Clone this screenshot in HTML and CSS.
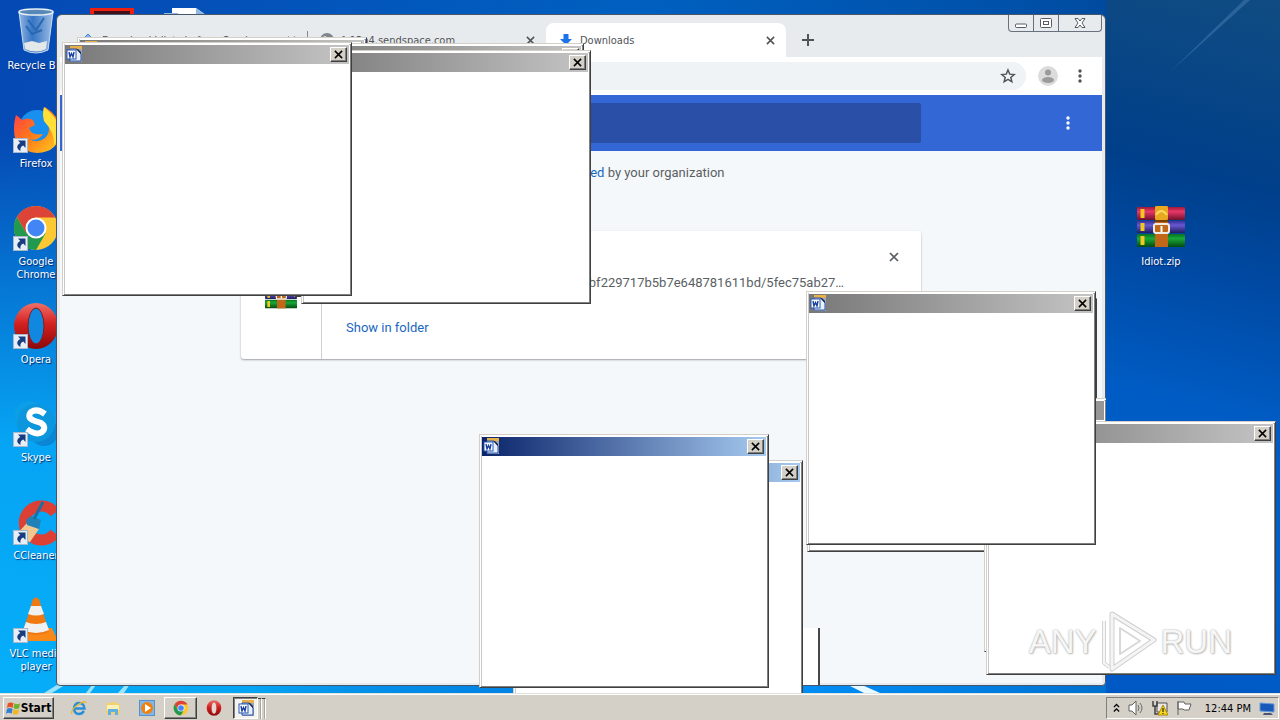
FILE: index.html
```html
<!DOCTYPE html>
<html lang="en">
<head>
<meta charset="utf-8">
<title>Desktop</title>
<link rel="stylesheet" href="styles.css">
</head>
<body>
<svg class="defs" aria-hidden="true">
  <defs>
    <linearGradient id="gRed" x1="0" y1="0" x2="0" y2="1"><stop offset="0" stop-color="#f07068"/><stop offset=".45" stop-color="#d42020"/><stop offset="1" stop-color="#8c0808"/></linearGradient>
    <linearGradient id="gFox" x1="0" y1="0" x2="1" y2="1"><stop offset="0" stop-color="#ff3850"/><stop offset=".5" stop-color="#ff7a18"/><stop offset="1" stop-color="#ffd020"/></linearGradient>
    <linearGradient id="gBook1" x1="0" y1="0" x2="0" y2="1"><stop offset="0" stop-color="#a01838"/><stop offset=".35" stop-color="#e83868"/><stop offset="1" stop-color="#70102c"/></linearGradient>
    <linearGradient id="gBook2" x1="0" y1="0" x2="0" y2="1"><stop offset="0" stop-color="#38309c"/><stop offset=".35" stop-color="#6858d0"/><stop offset="1" stop-color="#201c60"/></linearGradient>
    <linearGradient id="gBook3" x1="0" y1="0" x2="0" y2="1"><stop offset="0" stop-color="#087020"/><stop offset=".35" stop-color="#18a838"/><stop offset="1" stop-color="#044810"/></linearGradient>
    <linearGradient id="gBin" x1="0" y1="0" x2="1" y2="0"><stop offset="0" stop-color="#b8d4ee" stop-opacity=".8"/><stop offset=".4" stop-color="#4c88cc" stop-opacity=".7"/><stop offset="1" stop-color="#c8dcf0" stop-opacity=".8"/></linearGradient>
  </defs>
  <symbol id="word" viewBox="0 0 16 16">
    <rect x="4" y="0" width="12" height="16" fill="#98a8c0"/>
    <rect x="4" y="0" width="12" height="3" fill="#e8b048"/>
    <path d="M4 3h7l4 5v7H4z" fill="#e8f0fc" stroke="#2850a0"/>
    <path d="M10 3l5 5V6l-3-3z" fill="#202848"/>
    <rect x="1" y="4" width="9" height="9" fill="#fff" stroke="#2858b8"/>
    <path d="M3 6l1 5 1.500-3.500L7 11l1-5" fill="none" stroke="#1840a0" stroke-width="1.400"/>
  </symbol>
  <symbol id="x" viewBox="0 0 10 10"><path d="M1 1l8 8M9 1l-8 8" stroke="currentColor" stroke-width="1.700" fill="none"/></symbol>
  <symbol id="dots" viewBox="0 0 4 14"><circle cx="2" cy="2" r="1.700"/><circle cx="2" cy="7" r="1.700"/><circle cx="2" cy="12" r="1.700"/></symbol>
  <symbol id="link" viewBox="0 0 15 15"><rect x=".5" y=".5" width="14" height="14" fill="#e8eef6" stroke="#a8b8cc"/><path d="M5 2.500h7.500V10L10.300 7.500C8 8.500 7 10 7.500 13 3 10.500 3.500 7 7.300 5z" fill="#183c80"/></symbol>
  <symbol id="chrome" viewBox="0 0 48 48">
    <circle cx="24" cy="24" r="22" fill="#fcc934"/>
    <path d="M4.900 13A22 22 0 0 1 43.100 13L43.300 13.500H24L14.500 29.500z" fill="#dc4437"/>
    <path d="M4.900 13L14.500 29.500 24 24 33.500 29.500 24 46A22 22 0 0 1 4.900 13z" fill="#23984f"/>
    <circle cx="24" cy="24" r="10.500" fill="#fff"/><circle cx="24" cy="24" r="8.500" fill="#4285f4"/>
  </symbol>
  <symbol id="opera" viewBox="0 0 48 48"><ellipse cx="24" cy="24" rx="22" ry="23" fill="url(#gRed)"/><ellipse cx="24" cy="24" rx="8" ry="18" fill="var(--hole)" stroke="#8c1818"/></symbol>
  <symbol id="rar" viewBox="0 0 48 42">
    <rect x="0" y="1" width="48" height="13" rx="1" fill="url(#gBook1)"/><rect x="0" y="15" width="48" height="12" rx="1" fill="url(#gBook2)"/><rect x="0" y="28" width="48" height="13" rx="1" fill="url(#gBook3)"/>
    <path d="M5.500 3v9M5.500 17v8M5.500 30v9" stroke="#f0c820" stroke-width="4"/>
    <rect x="18" y="0" width="13" height="41" fill="#c06818"/><rect x="18" y="0" width="13" height="14" rx="2" fill="#e8a820"/><path d="M19 9q5-8 11 0" fill="none" stroke="#fcd860" stroke-width="2"/><rect x="18" y="14" width="13" height="2" fill="#784008"/>
    <rect x="17" y="18" width="15" height="9" rx="2" fill="none" stroke="#f0ece4" stroke-width="2"/><path d="M24.500 20v6" stroke="#fff" stroke-width="2"/>
  </symbol>
</svg>

<main class="desktop">
  <svg class="rays" viewBox="0 0 1280 693" preserveAspectRatio="none" aria-hidden="true">
    <path d="M1170 72L1244 0h6z" fill="#6fa0d0" opacity=".3"/>
    <path d="M44 693l16-10h8l-16 10zM86 693l6-8h4l-6 8zM118 693l8-9h4l-6 9z" fill="#bff0ff" opacity=".8"/>
    <path d="M848 685h14l18 8h-16z" fill="#e8faff"/>
  </svg>
  <svg class="peek" viewBox="0 0 124 16" aria-hidden="true"><path d="M2 1h40v15H2z" fill="#401018" stroke="#f02010" stroke-width="4"/><path d="M82 0h24l10 7v9H82z" fill="#fff"/><path d="M106 0v7h10zM74 5h14v4H74z" fill="#90b8e0"/></svg>

  <nav class="icons">
    <div class="tile"><svg viewBox="0 0 48 48"><path d="M7 4h34l-5 38q-12 6-24 0z" fill="url(#gBin)" stroke="#c8dcee"/><ellipse cx="24" cy="4" rx="17" ry="3" fill="#5888b8" stroke="#e8f0f4" stroke-width="1.500"/><path d="M16 12l8 10 8-12M14 18l6 8 10-4" stroke="#2868b0" stroke-width="2" fill="none"/><path d="M12 35l8-2 7 2 8-2-1 8q-10 5-21 0z" fill="#e4e8e8"/></svg><span>Recycle Bin</span></div>
    <div class="tile"><svg viewBox="0 0 48 48"><circle cx="25" cy="22" r="18" fill="#1890f0"/><path d="M4 9q3 2 6 5 6-3 11 0l2 5-6 3q2 8 14 6-6 8-14 5 9 5 16-1 7-7 2-18l-3-6 1-7q16 10 15 25-1 20-23 21Q2 45 2 24q0-9 2-15z" fill="url(#gFox)"/><path d="M32 1q16 12 15 26-1 8-5 12 1-12-10-24-2-8 0-14z" fill="#ffdf38"/></svg><svg class="arrow"><use href="#link"/></svg><span>Firefox</span></div>
    <div class="tile"><svg><use href="#chrome"/></svg><svg class="arrow"><use href="#link"/></svg><span>Google<br>Chrome</span></div>
    <div class="tile opera"><svg><use href="#opera"/></svg><svg class="arrow"><use href="#link"/></svg><span>Opera</span></div>
    <div class="tile"><svg viewBox="0 0 48 48"><circle cx="17" cy="16" r="15" fill="#0a9fe6"/><circle cx="32" cy="32" r="14" fill="#0a86d4"/><circle cx="24" cy="23" r="19" fill="#0c96de"/><path d="M33 14q-8-6-14-2-5 6 4 9l6 2q6 4 1 9-6 4-15-3" stroke="#fff" stroke-width="6" fill="none"/></svg><svg class="arrow"><use href="#link"/></svg><span>Skype</span></div>
    <div class="tile"><svg viewBox="0 0 48 48"><path d="M43 15A17 17 0 1 0 43 35" fill="none" stroke="#dc4034" stroke-width="11"/><path d="M15 25l12 6-9 13-16-5z" fill="#f0c890"/><path d="M14 22l5-4 10 4-2 9-12-4z" fill="#2080b8"/><path d="M22 21L31 4" stroke="#1870a8" stroke-width="3"/></svg><svg class="arrow"><use href="#link"/></svg><span>CCleaner</span></div>
    <div class="tile"><svg viewBox="0 0 48 48"><path d="M8 32h32l6 13H2z" fill="#f88818"/><path d="M21 3q3-3 6 0l10 33q-13 6-26 0z" fill="#f07810"/><path d="M19 10h10l3 8q-8 3-16 0zM14 26q10 4 20 0l3 8q-13 6-26 0z" fill="#f0f0f0"/></svg><svg class="arrow"><use href="#link"/></svg><span>VLC media<br>player</span></div>
  </nav>
  <div class="tile zip"><svg class="book"><use href="#rar"/></svg><span>Idiot.zip</span></div>

  <section class="browser">
    <div class="strip">
      <div class="tab"><svg class="fav" viewBox="0 0 16 16"><path d="M8 2l6 6-6 6-6-6z" fill="#8ab4f0" stroke="#4080d8"/></svg><span class="name">Download Idiot.zip from Sendspace.com</span><button class="tabx" aria-label="Close tab"><svg><use href="#x"/></svg></button></div>
      <div class="tab divided"><svg class="fav" viewBox="0 0 16 16"><circle cx="8" cy="8" r="7" fill="#80868b"/><path d="M3 5l4-1 1 3-3 2-2-1zM9 9l4-1-2 4z" fill="#e8eaed"/></svg><span class="name">fs13n4.sendspace.com</span><button class="tabx" aria-label="Close tab"><svg><use href="#x"/></svg></button></div>
      <div class="tab active"><svg class="fav" viewBox="0 0 16 16"><path d="M5.500 2h5v5H14l-6 6-6-6h3.500z" fill="#1a73e8"/></svg><span class="name">Downloads</span><button class="tabx" aria-label="Close tab"><svg><use href="#x"/></svg></button></div>
      <button class="plus" aria-label="New tab"><svg viewBox="0 0 12 12"><path d="M6 0v12M0 6h12" stroke="#505458" stroke-width="2"/></svg></button>
      <div class="controls">
        <button aria-label="Minimize"><svg viewBox="0 0 12 10"><rect x=".5" y="6" width="11" height="3.500" rx="1" fill="#fff" stroke="#555c64"/></svg></button>
        <button aria-label="Restore"><svg viewBox="0 0 12 10"><rect x=".5" y=".5" width="11" height="9" rx="1" fill="#fff" stroke="#555c64"/><rect x="3.500" y="3.500" width="5" height="3" fill="none" stroke="#555c64"/></svg></button>
        <button class="wide" aria-label="Close"><svg viewBox="0 0 12 10"><path d="M1 .5h3l2 2.500 2-2.500h3L8 5l3 4.500H8L6 7 4 9.500H1L4 5z" fill="#fff" stroke="#555c64"/></svg></button>
      </div>
    </div>
    <div class="toolbar">
      <div class="omni"><svg viewBox="0 0 24 24"><path d="M12 3l2.600 6.200 6.700.6-5.100 4.400 1.600 6.500L12 17.200l-5.800 3.500 1.600-6.500-5.100-4.400 6.700-.6z" fill="none" stroke="#505458" stroke-width="2.200"/></svg></div>
      <svg class="avatar" viewBox="0 0 20 20"><circle cx="10" cy="10" r="10" fill="#dcdcdc"/><circle cx="10" cy="6.500" r="3" fill="#9a9a9a"/><ellipse cx="10" cy="14" rx="6" ry="3" fill="#9a9a9a"/></svg>
      <button class="menu" aria-label="Menu"><svg><use href="#dots"/></svg></button>
    </div>
    <header class="bluebar"><input type="search" aria-label="Search downloads"><button class="menu" aria-label="More actions"><svg><use href="#dots"/></svg></button></header>
    <div class="page">
      <p class="managed">Your browser is <a href="#">managed</a> by your organization</p>
      <article class="card">
        <div class="thumb"><svg><use href="#rar"/></svg></div>
        <div class="info"><button class="remove" aria-label="Remove"><svg><use href="#x"/></svg></button><p class="url">dbf229717b5b7e648781611bd/5fec75ab27…</p><a href="#">Show in folder</a></div>
      </article>
    </div>
  </section>

  <div class="trail"></div>
  <section class="win w-a2"><div class="title"><svg><use href="#word"/></svg><button aria-label="Close"><svg><use href="#x"/></svg></button></div></section>
  <section class="win w-b2"><div class="title"><svg><use href="#word"/></svg><button aria-label="Close"><svg><use href="#x"/></svg></button></div></section>
  <section class="win w-b"><div class="title"><svg><use href="#word"/></svg><button aria-label="Close"><svg><use href="#x"/></svg></button></div></section>
  <section class="win w-a"><div class="title"><svg><use href="#word"/></svg><button aria-label="Close"><svg><use href="#x"/></svg></button></div></section>
  <section class="win w-c2"><div class="title"></div></section>
  <section class="win w-d2"><div class="title"></div></section>
  <section class="win w-d"><div class="title"><svg><use href="#word"/></svg><button aria-label="Close"><svg><use href="#x"/></svg></button></div></section>
  <section class="win w-c"><div class="title"><svg><use href="#word"/></svg><button aria-label="Close"><svg><use href="#x"/></svg></button></div></section>
  <section class="win focus w-f"><div class="title"><svg><use href="#word"/></svg><button aria-label="Close"><svg><use href="#x"/></svg></button></div></section>
  <section class="win focus w-e"><div class="title"><svg><use href="#word"/></svg><button aria-label="Close"><svg><use href="#x"/></svg></button></div></section>

  <div class="mark"><span>ANY</span><svg viewBox="0 0 58 62"><g fill="none" stroke-linejoin="round"><path d="M12 3L54 29 12 58z" stroke="#cfcfcf" stroke-width="5"/><path d="M12 3L54 29 12 58z" stroke="#f4f4f4" stroke-width="3"/><path d="M20 17L40 30 20 43z" stroke="#d8d8d8" stroke-width="2"/><path d="M4 10v42l5 4" stroke="#d4d4d4" stroke-width="4"/><path d="M4 10v42l5 4" stroke="#f6f6f6" stroke-width="2"/></g></svg><span>RUN</span></div>
</main>

<footer class="taskbar">
  <button class="start"><svg viewBox="0 0 16 16"><path d="M2 3q3-2 6 0L7 8Q4 6 1 8z" fill="#e85020"/><path d="M9 3q3 2 6 0l-1 5q-3 2-6 0z" fill="#70b030"/><path d="M1 9q3-2 6 0l-1 5q-3-2-6 0z" fill="#3080d8"/><path d="M8 9q3 2 6 0l-1 5q-3 2-6 0z" fill="#f0b820"/></svg>Start</button>
  <div class="quick">
    <button aria-label="Internet Explorer"><svg viewBox="0 0 16 16"><path d="M13 11q-2 3-5 3-5 0-5-6 1-5 5-5 5 0 5.500 5.500H4" fill="none" stroke="#2890d8" stroke-width="2.400"/><path d="M1 14Q-1 10 8 4q7-4 7-1" fill="none" stroke="#e8b828" stroke-width="1.300"/></svg></button>
    <button aria-label="Explorer"><svg viewBox="0 0 16 16"><path d="M1 3h5l1-1h5v2h3v10H1z" fill="#f0d070"/><path d="M2 5h12v5H2z" fill="#faf0b8"/><path d="M3 15V9h10v6h-3v-3H6v3z" fill="#60b0e0"/></svg></button>
    <button aria-label="Media Player"><svg viewBox="0 0 16 16"><rect x=".5" y=".5" width="15" height="15" fill="#80b8e8" stroke="#5890c8"/><circle cx="8" cy="8" r="6" fill="#f08010"/><path d="M6 4l6 4-6 4z" fill="#fff"/></svg></button>
    <button class="up" aria-label="Chrome"><svg><use href="#chrome"/></svg></button>
    <button class="op" aria-label="Opera"><svg><use href="#opera"/></svg></button>
    <button class="down" aria-label="Word"><svg><use href="#word"/></svg></button>
    <i></i><i></i>
  </div>
  <div class="tray">
    <svg class="chev" viewBox="0 0 8 10"><path d="M1 4l3-3 3 3M1 9l3-3 3 3" fill="none" stroke="#000" stroke-width="1.500"/></svg>
    <svg viewBox="0 0 16 16"><path d="M1 5h3l4-4v14l-4-4H1z" fill="#fff" stroke="#606060"/><path d="M10 5q2 3 0 6M12 3q4 5 0 10" fill="none" stroke="#686868"/></svg>
    <svg viewBox="0 0 16 16"><path d="M5 3h10v9H5z" fill="#e8e8e8" stroke="#505050"/><path d="M1 1v5h4V1M3 6v8h4" fill="none" stroke="#404040" stroke-width="1.500"/><path d="M11 5l5 10H6z" fill="#f8d820" stroke="#b08800"/><path d="M11 8v4M11 13v1" stroke="#000"/></svg>
    <svg viewBox="0 0 16 16"><path d="M2 1v14M2 2h6l1 2h6l-2 6H8L7 9H2z" fill="#fff" stroke="#606060"/></svg>
    <time>12:44 PM</time>
    <svg class="show" viewBox="0 0 16 16"><path d="M1 3l14 1v8L1 11z" fill="#1858b8" stroke="#6898d8"/><path d="M5 13h7l2 2H4z" fill="#485870"/></svg>
  </div>
</footer>
</body>
</html>
```
FILE: styles.css
```css
* { box-sizing: border-box; }
body {
  margin: 0;
  height: 100vh;
  display: flex;
  flex-direction: column;
  overflow: hidden;
  font: 11px/13px Tahoma, "DejaVu Sans Condensed", "DejaVu Sans", sans-serif;
}
button { padding: 0; border: 0; background: none; font: inherit; color: inherit; display: flex; align-items: center; justify-content: center; }
svg { display: block; flex: none; }
a { color: #1967c0; text-decoration: none; }
p { margin: 0; }
.defs { position: absolute; width: 0; height: 0; }

.desktop {
  position: relative;
  flex: 1;
  overflow: hidden;
  background:
    radial-gradient(ellipse 560px 560px at 0 100%, #06aef8 0, #06a4f4 45%, rgba(6, 140, 232, 0) 100%),
    radial-gradient(ellipse 900px 500px at 60% 100%, #0090f8 0, rgba(0, 120, 230, 0) 80%),
    linear-gradient(90deg, #0549b4 0, #0060c0 50%, #0050a8 80%, #00408c 100%);
}
.desktop::after {
  content: "";
  position: absolute;
  inset: 0 0 0 auto;
  width: 174px;
  background: linear-gradient(194deg, #104c82 0, #003f8a 26%, #0048a0 38%, #005cc4 58%, #0060cc 80%, #0058c4 100%);
  z-index: 0;
}
.rays { position: absolute; inset: 0; width: 100%; height: 100%; z-index: 1; }
.peek { position: absolute; left: 90px; top: 8px; width: 124px; height: 16px; }

.icons { position: absolute; left: 0; top: 0; width: 72px; }
.tile { position: relative; height: 98px; padding-top: 8px; display: flex; flex-direction: column; align-items: center; gap: 3px; color: #fff; text-align: center; white-space: nowrap; text-shadow: 1px 1px 1px #00286c; }
.tile > svg { width: 48px; height: 48px; }
.tile > .arrow { position: absolute; left: 13px; top: 40px; width: 15px; height: 15px; }
.opera { --hole: #1088e0; }
.zip { position: absolute; right: 83px; top: 196px; width: 72px; z-index: 1; }
.tile > .book { height: 42px; margin: 2px 0 4px; }

.browser {
  position: absolute;
  left: 56px; right: 174px; top: 14px; bottom: 7px;
  padding: 0 3px 2px 3px;
  display: flex;
  flex-direction: column;
  border: 1px solid #46566c;
  border-radius: 6px 6px 4px 4px;
  background: #e8ebee;
  z-index: 2;
}
.strip { display: flex; height: 42px; padding: 8px 0 0 8px; position: relative; color: #505458; }
.tab { flex: 0 1 239px; min-width: 0; display: flex; align-items: center; gap: 6px; padding: 0 12px; }
.active { flex-basis: 240px; background: #fff; border-radius: 8px 8px 0 0; }
.divided { background: linear-gradient(#888, #888) 0 50% / 1px 18px no-repeat; }
.fav { width: 16px; height: 16px; }
.name { flex: 1; min-width: 0; overflow: hidden; white-space: nowrap; }
.tabx { width: 8px; height: 16px; }
.tabx svg { width: 9px; height: 9px; }
.plus { width: 12px; margin-left: 16px; }
.plus svg { width: 12px; height: 12px; }
.controls { position: absolute; right: 0; top: 0; display: flex; height: 17px; border: 1px solid #68727c; border-top: 0; border-radius: 0 0 4px 4px; }
.controls button { width: 25px; border-right: 1px solid #68727c; }
.controls .wide { width: 42px; border: 0; }
.controls svg { width: 12px; height: 10px; }
.toolbar { height: 38px; display: flex; align-items: center; background: #fff; padding-right: 18px; }
.omni { flex: 1; height: 28px; border-radius: 0 14px 14px 0; background: #eff3f5; display: flex; align-items: center; justify-content: flex-end; padding-right: 10px; }
.omni svg { width: 16px; height: 16px; }
.avatar { width: 20px; height: 20px; margin: 0 18px 0 12px; }
.menu svg { width: 4px; height: 14px; fill: #505458; }
.toolbar .menu { width: 8px; }
.bluebar { height: 56px; background: #3367d6; display: flex; align-items: center; justify-content: center; position: relative; }
.bluebar input { width: 680px; max-width: 80%; height: 40px; border: 0; border-radius: 2px; background: #2950a6; }
.bluebar .menu { position: absolute; right: 32px; }
.bluebar .menu svg { fill: #fff; }
.page { flex: 1; background: #f5f8fb; padding-top: 12px; font: 13px/20px Roboto, sans-serif; color: #5a5f64; }
.managed { text-align: center; padding-left: 20px; margin-bottom: 48px; }
.card { display: flex; width: 680px; max-width: 90%; height: 128px; margin: 0 auto; background: #fff; border-radius: 3px; box-shadow: 0 1px 2px #9a9fa4; }
.thumb { width: 81px; border-right: 1px solid #d0d0d0; padding: 48px 24px 0; }
.thumb svg { width: 32px; height: 32px; }
.info { flex: 1; display: flex; flex-direction: column; padding: 21px 22px 0 24px; }
.info > a { margin-top: 25px; }
.remove { align-self: flex-end; width: 10px; height: 10px; }
.remove svg { width: 10px; height: 10px; }
.url { text-align: right; margin: 11px 55px 0 0; }

.win {
  position: absolute;
  width: 290px; height: 254px;
  background: #fff;
  border: 1px solid;
  border-color: #d4d0c8 #404040 #404040 #d4d0c8;
  box-shadow: inset 1px 1px #fff, inset -1px -1px #808080, inset 2px 2px #c8c8c8;
  padding: 1px 2px 2px;
  z-index: 3;
}
.title { height: 20px; display: flex; align-items: center; justify-content: space-between; padding: 0 2px 1px 1px; background: linear-gradient(90deg, #787878, #c4c4c4); border-top: 1px solid #fff; }
.focus .title { background: linear-gradient(90deg, #0a246a, #a6caf0); }
.title > svg { width: 16px; height: 16px; }
.title button { width: 17px; height: 15px; color: #000; background: #d4d0c8; border: 1px solid; border-color: #fff #404040 #404040 #fff; box-shadow: inset -1px -1px #808080; }
.title button svg { width: 9px; height: 9px; }
.w-a { left: 62px; top: 42px; }
.w-a2 { left: 77px; top: 37px; }
.w-b { left: 301px; top: 50px; }
.w-b2 { left: 294px; top: 43px; }
.w-c { left: 806px; top: 291px; }
.w-c2 { left: 807px; top: 298px; }
.w-d { left: 986px; top: 421px; }
.w-d2 { left: 984px; top: 398px; width: 122px; border-right: 0; }
.w-d2 .title { background: #969696; }
.w-e { left: 479px; top: 434px; }
.w-f { left: 513px; top: 460px; }
.trail { position: absolute; left: 803px; bottom: 8px; width: 17px; height: 57px; background: #fff; border-right: 2px solid #484848; z-index: 3; }

.mark { position: absolute; right: 48px; bottom: 20px; display: flex; align-items: center; gap: 3px; z-index: 5; font: 33px/62px "Liberation Sans", sans-serif; color: #f6f6f6; text-shadow: 0 0 2px #a8a8a8, 1px 1px 2px #c0c0c0; }
.mark svg { width: 58px; height: 62px; }

.taskbar { height: 27px; display: flex; align-items: center; padding: 2px 1px 0 3px; background: #d4d0c8; border-top: 1px solid #e4e2dc; box-shadow: inset 0 1px #fff; position: relative; z-index: 6; }
.start, .up { border: 1px solid; border-color: #fff #404040 #404040 #fff; box-shadow: inset -1px -1px #808080; }
.start { width: 51px; height: 22px; font: bold 12px/16px Tahoma, "DejaVu Sans Condensed", sans-serif; gap: 0; }
.start svg { width: 15px; height: 16px; }
.quick { display: flex; align-items: center; flex: 1; padding-left: 8px; height: 22px; }
.quick button { width: 34px; height: 22px; }
.quick svg { width: 16px; height: 16px; }
.quick .up { width: 33px; }
.quick .op { --hole: #e8d8d4; }
.quick .down { width: 25px; margin-left: 2px; background: #f4f2ee; border: 1px solid; border-color: #404040 #fff #fff #404040; box-shadow: inset 1px 1px #808080; }
.quick i { width: 4px; height: 21px; border-right: 1px solid #fff; border-top: 1px solid #404040; box-shadow: inset -1px 0 #a8a49c; }
.tray { display: flex; align-items: center; gap: 8px; height: 22px; padding: 0 3px 0 6px; border: 1px solid; border-color: #808080 #fff #fff #808080; }
.tray svg { width: 16px; height: 16px; }
.tray .chev { width: 7px; height: 10px; }
.tray time { margin-left: 5px; }
```
